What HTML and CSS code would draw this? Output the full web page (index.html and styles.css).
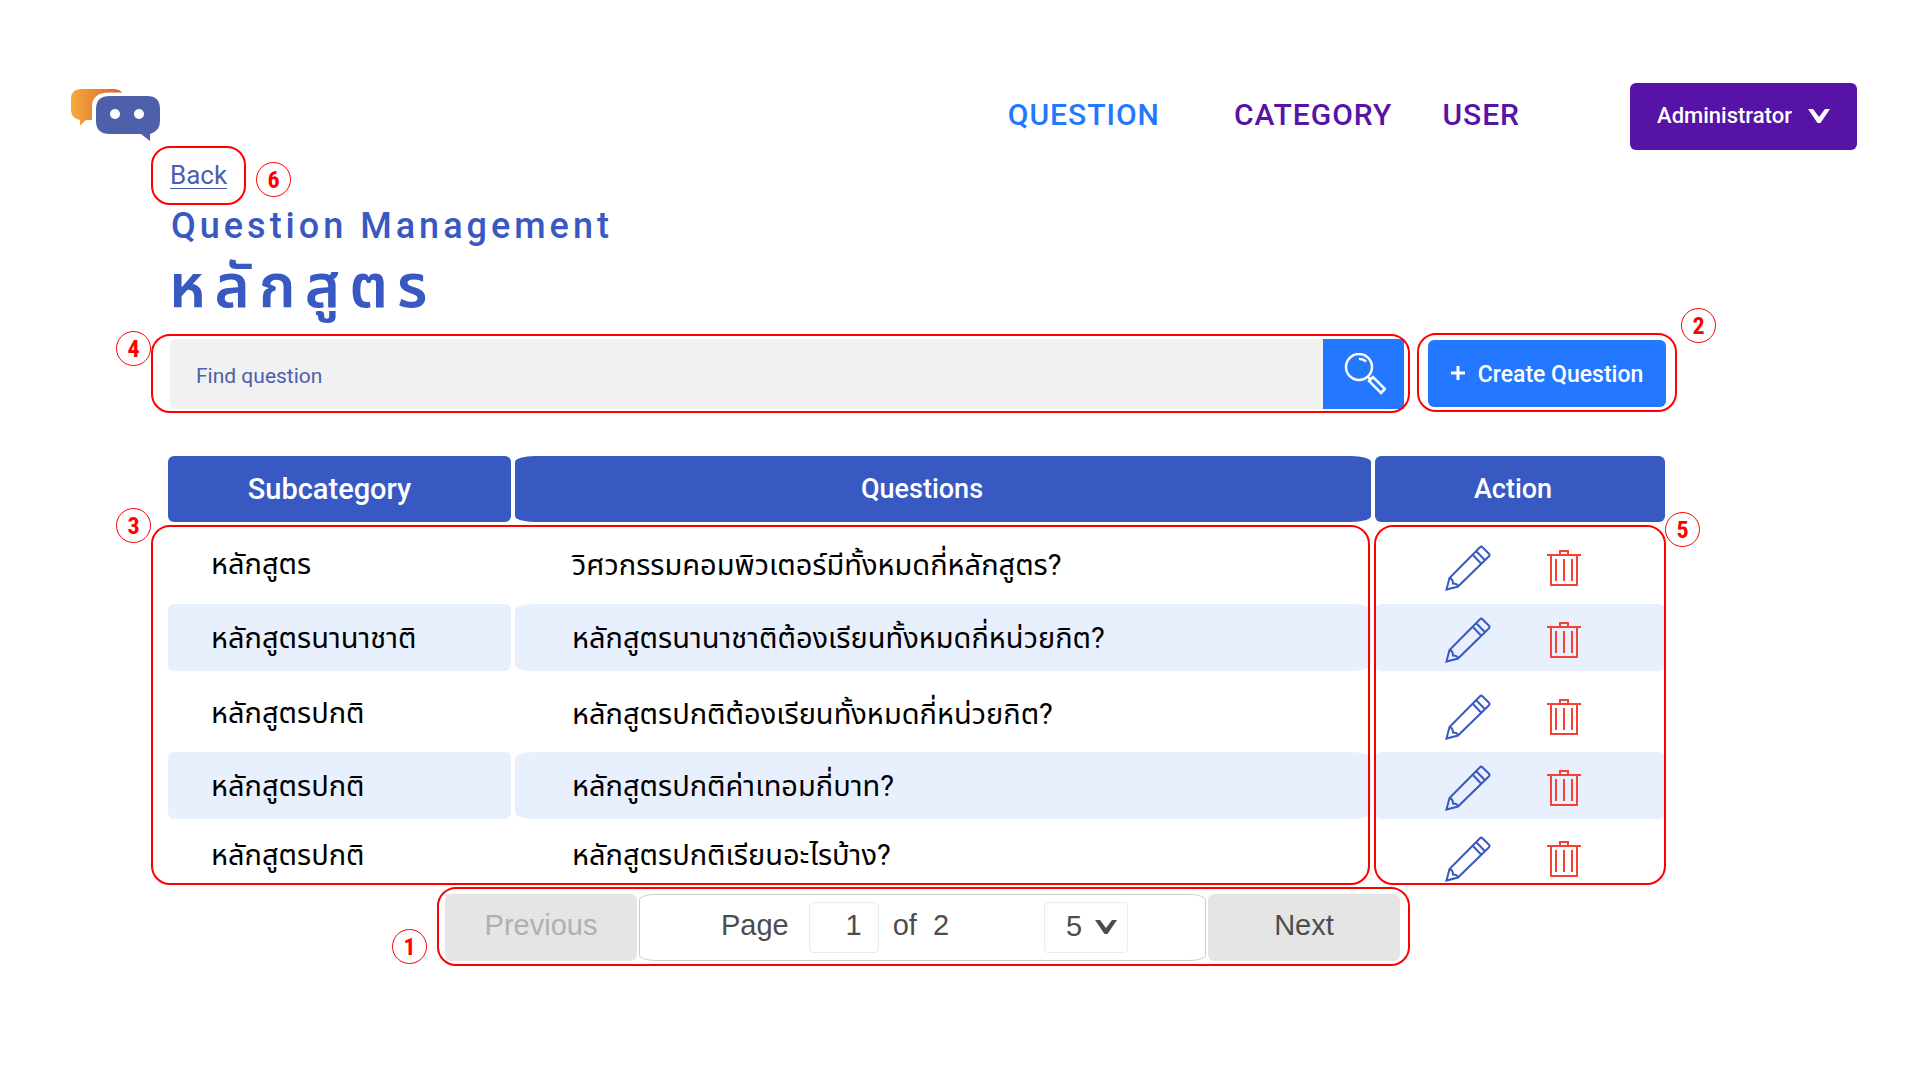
FILE: index.html
```html
<!DOCTYPE html>
<html lang="th">
<head>
<meta charset="utf-8">
<meta name="viewport" content="width=device-width, initial-scale=1">
<title>Question Management</title>
<link rel="stylesheet" href="styles.css">
</head>
<body>
<svg class="defs" aria-hidden="true">
  <symbol id="pencil" viewBox="0 0 46 46">
    <path d="M1.500 44.500 4.500 33 35 2.200Q36.200 1 37.400 2.200L44 8.800Q45.200 10 44 11.200L13 41.500ZM4.500 33Q8 34 8 38.500 12.500 38.500 13 41.500M27.500 9.500 36 18.500M31 6 39.800 15"/>
  </symbol>
  <symbol id="trash" viewBox="0 0 34 38">
    <path d="M0 6H34M13 6V2H21V6M4 6V36H30V6M9 10V32M17 10V32M25 10V32"/>
  </symbol>
</svg>

<header class="topbar">
  <a class="logo" href="#" aria-label="Home">
    <svg viewBox="0 0 90 54" width="90" height="54">
      <defs><linearGradient id="amber"><stop offset="0" stop-color="#f7a83c"/><stop offset="1" stop-color="#d9602f"/></linearGradient></defs>
      <path fill="url(#amber)" d="M10 1H42Q49 1 51 4.500H38Q21 4.500 21 19V32H15L9 37.500V32Q0 30 0 22V11Q0 1 10 1Z"/>
      <path fill="#4e60aa" d="M39 8H76Q89 8 89 21V33Q89 43 79 46V53L70 46H39Q25 46 25 33V21Q25 8 39 8Z"/>
      <circle cx="44" cy="26" r="5" fill="#fff"/><circle cx="68" cy="26" r="5" fill="#fff"/>
    </svg>
  </a>
  <nav class="nav">
    <a class="nav-link current" href="#">QUESTION</a>
    <a class="nav-link" href="#">CATEGORY</a>
    <a class="nav-link" href="#">USER</a>
  </nav>
  <button class="account" type="button">Administrator
    <svg class="chevron" viewBox="0 0 22 14" width="22" height="14"><path d="M0 0H5L11 8 17 0H22L12.500 14H9.500Z"/></svg>
  </button>
</header>

<main class="content">
  <div class="back marked">
    <a class="back-link" href="#">Back</a>
    <span class="frame"></span><span class="badge badge-6">6</span>
  </div>
  <h1 class="title">Question Management</h1>
  <h2 class="subject">หลักสูตร</h2>

  <div class="tools">
    <form class="search marked">
      <input class="search-input" type="search" placeholder="Find question" aria-label="Find question">
      <button class="search-button" type="button" aria-label="Search">
        <svg viewBox="0 0 42 42" width="42" height="42"><circle cx="15" cy="14" r="13"/><path d="M15 6Q19 5.500 22 8.500M24 24 27 27M25 28 29 24 41 36 37 40Z"/></svg>
      </button>
      <span class="frame"></span><span class="badge badge-4">4</span>
    </form>
    <div class="create marked">
      <button class="create-button" type="button"><svg viewBox="0 0 14 18" width="14" height="18"><path d="M7 0V14M0 7H14"/></svg>Create Question</button>
      <span class="frame"></span><span class="badge badge-2">2</span>
    </div>
  </div>

  <div class="listing">
    <table class="questions">
      <thead>
        <tr><th class="col-sub">Subcategory</th><th class="col-question">Questions</th><th class="col-action">Action</th></tr>
      </thead>
      <tbody>
        <tr><td>หลักสูตร</td><td>วิศวกรรมคอมพิวเตอร์มีทั้งหมดกี่หลักสูตร?</td><td><div class="actions"><button type="button" class="edit" aria-label="Edit"><svg><use href="#pencil"/></svg></button><button type="button" class="delete" aria-label="Delete"><svg><use href="#trash"/></svg></button></div></td></tr>
        <tr><td>หลักสูตรนานาชาติ</td><td>หลักสูตรนานาชาติต้องเรียนทั้งหมดกี่หน่วยกิต?</td><td><div class="actions"><button type="button" class="edit" aria-label="Edit"><svg><use href="#pencil"/></svg></button><button type="button" class="delete" aria-label="Delete"><svg><use href="#trash"/></svg></button></div></td></tr>
        <tr><td>หลักสูตรปกติ</td><td>หลักสูตรปกติต้องเรียนทั้งหมดกี่หน่วยกิต?</td><td><div class="actions"><button type="button" class="edit" aria-label="Edit"><svg><use href="#pencil"/></svg></button><button type="button" class="delete" aria-label="Delete"><svg><use href="#trash"/></svg></button></div></td></tr>
        <tr><td>หลักสูตรปกติ</td><td>หลักสูตรปกติค่าเทอมกี่บาท?</td><td><div class="actions"><button type="button" class="edit" aria-label="Edit"><svg><use href="#pencil"/></svg></button><button type="button" class="delete" aria-label="Delete"><svg><use href="#trash"/></svg></button></div></td></tr>
        <tr><td>หลักสูตรปกติ</td><td>หลักสูตรปกติเรียนอะไรบ้าง?</td><td><div class="actions"><button type="button" class="edit" aria-label="Edit"><svg><use href="#pencil"/></svg></button><button type="button" class="delete" aria-label="Delete"><svg><use href="#trash"/></svg></button></div></td></tr>
      </tbody>
    </table>
    <span class="frame frame-rows"></span><span class="badge badge-3">3</span>
    <span class="frame frame-actions"></span><span class="badge badge-5">5</span>
  </div>

  <div class="pager marked">
    <button class="step" type="button" disabled>Previous</button>
    <div class="pages">
      <label for="page">Page</label>
      <input id="page" class="page-input" type="text" value="1">
      <span class="total">of&nbsp; 2</span>
      <div class="size">
        <select class="size-select" aria-label="Rows per page"><option>5</option><option>10</option></select>
        <svg class="chevron" viewBox="0 0 22 14" width="22" height="14"><path d="M0 0H5L11 8 17 0H22L12.500 14H9.500Z"/></svg>
      </div>
    </div>
    <button class="step" type="button">Next</button>
    <span class="frame"></span><span class="badge badge-1">1</span>
  </div>
</main>
</body>
</html>
```
FILE: styles.css
```css
* { box-sizing: border-box; }
body { margin: 0; background: #fff; font-family: Roboto, "Noto Sans Thai", "Noto Sans", sans-serif; color: #000; }
button, input, select { font: inherit; margin: 0; }
button { border: 0; padding: 0; cursor: pointer; }
a { text-decoration: none; }
svg { display: block; }
.defs { position: absolute; width: 0; height: 0; }

.topbar { display: flex; align-items: center; padding: 83px 63px 0 71px; }
.logo { padding-bottom: 4px; }
.nav { display: flex; margin-left: auto; padding-bottom: 4px; }
.nav-link { color: #5712a6; font-size: 30px; font-weight: 500; line-height: 34px; letter-spacing: 1px; margin-right: 50px; }
.nav-link.current { color: #2478ff; margin-right: 74px; }
.nav-link:last-child { margin-right: 110px; }
.account { display: flex; align-items: center; justify-content: center; gap: 16px; width: 227px; height: 67px; padding-bottom: 2px; border-radius: 6px; background: #5712a6; color: #fff; font-size: 22px; font-weight: 500; }
.chevron { fill: currentColor; }

.content { padding: 0 254px 60px 168px; }

/* Numbered call-outs drawn over the controls they describe */
.marked, .listing { position: relative; }
.frame { position: absolute; inset: -6px; border: 2px solid #f00; border-radius: 19px; pointer-events: none; }
.badge { position: absolute; display: flex; align-items: center; justify-content: center; width: 35px; height: 35px; border: 1px solid #f00; border-radius: 50%; color: #f00; font: bold 24px/32px "Liberation Sans Narrow", "Roboto Condensed", Roboto, sans-serif; }

.back { width: 95px; margin: -4px 0 0 -17px; height: 59px; padding: 16px 19px; }
.back .frame { inset: 0; }
.back-link { display: block; width: max-content; color: #4e60aa; font-size: 26px; line-height: 26px; border-bottom: 1px solid; }
.badge-6 { left: 105px; top: 16px; }
.title { margin: 0 0 0 3px; color: #3859c2; font-size: 36px; font-weight: 500; line-height: 42px; letter-spacing: 4px; }
.subject { margin: 0 0 0 1px; color: #3859c2; font-size: 60px; font-weight: 600; line-height: 80px; letter-spacing: 9px; }

.tools { display: flex; gap: 24px; margin-top: 12px; }
.search { display: flex; flex: 1; height: 70px; margin-left: 2px; }
.search .frame { inset: -5px -6px -4px -19px; }
.search-input { flex: 1; min-width: 0; border: 0; padding: 4px 26px 0; border-radius: 6px 0 0 6px; background: #f1f1f1; color: #4e60aa; font-size: 21px; }
.search-input::placeholder { color: #4e60aa; opacity: 1; }
.search-button { display: flex; align-items: center; justify-content: center; width: 81px; padding-left: 2px; background: #2478ff; }
.search-button svg { fill: none; stroke: #fff; stroke-width: 2.5; }
.badge-4 { left: -54px; top: -8px; }
.create .frame { inset: -6px -11px -3px -11px; }
.create-button { display: flex; align-items: center; justify-content: center; gap: 13px; width: 238px; height: 67px; margin-top: 1px; padding-top: 2px; border-radius: 6px; background: #2478ff; color: #fff; font-size: 23px; font-weight: 500; }
.create-button svg { stroke: #fff; stroke-width: 3; }
.badge-2 { right: -50px; top: -31px; }

.listing { margin-top: 47px; }
.questions { width: calc(100% + 7px); margin: 0 -4px; table-layout: fixed; border-collapse: separate; border-spacing: 4px 0; }
.questions th { height: 66px; padding: 0; background: #3859c2; color: #fff; font-size: 27px; font-weight: 500; border-radius: 6px; }
.questions .col-sub { width: 343px; padding-right: 20px; font-size: 29px; }
.questions .col-action { width: 290px; padding-right: 14px; }
.questions .col-question { border-radius: 20px / 6px; padding-right: 42px; }
.questions td { height: 82px; padding: 2px 0 0 43px; font-size: 29px; font-weight: 400; line-height: 40px; white-space: nowrap; }
.questions td:nth-child(2) { padding-left: 57px; padding-top: 4px; }
.questions td:nth-child(3) { padding-left: 70px; padding-top: 10px; }
.questions tr:nth-child(3) td { height: 81px; }
.questions tr:nth-child(even) td { height: 67px; padding-top: 0; background: #e8f0fe; border-radius: 6px; }
.questions tr:nth-child(even) td:nth-child(2) { border-radius: 20px / 6px; }
.questions tr:nth-child(even) td:nth-child(3) { padding-top: 4px; }
.questions tr:last-child td { height: 66px; padding-top: 6px; }
.questions tr:last-child td:nth-child(3) { padding-top: 14px; }
.actions { display: flex; align-items: center; gap: 56px; }
.edit, .delete { background: none; }
.edit svg { width: 46px; height: 46px; fill: none; stroke: #3859c2; stroke-width: 2; }
.delete svg { width: 34px; height: 38px; fill: none; stroke: #f44336; stroke-width: 2; }
.frame-rows { inset: 69px 296px 0 -17px; }
.frame-actions { inset: 69px 0 0 auto; width: 292px; }
.badge-3 { left: -52px; top: 52px; }
.badge-5 { right: -34px; top: 56px; }

.pager { display: flex; gap: 2px; height: 67px; margin: 9px 266px 0 277px; color: #4d4d4d; font-family: "Liberation Sans", Arial, sans-serif; font-size: 29px; }
.pager .frame { inset: -7px -10px -5px -8px; }
.step { width: 192px; padding-bottom: 4px; border-radius: 6px; background: #e5e5e5; color: #4d4d4d; }
.step:disabled { color: #b0b0b0; }
.pages { display: flex; flex: 1; align-items: center; justify-content: center; padding-left: 4px; border: 1px solid #ccc; border-radius: 16px / 6px; }
.pages label, .total { padding-bottom: 4px; }
.page-input { width: 70px; height: 51px; margin: 0 14px 0 20px; padding: 0 16px 4px 0; text-align: right; border: 1px solid #ebebeb; border-radius: 4px; background: #fff; color: inherit; }
.size { position: relative; margin-left: 95px; }
.size-select { appearance: none; width: 84px; height: 51px; padding: 0 0 4px 21px; border: 1px solid #ebebeb; border-radius: 4px; background: #fff; color: inherit; }
.size .chevron { position: absolute; right: 11px; top: 18px; pointer-events: none; }
.badge-1 { left: -53px; top: 35px; }
```
